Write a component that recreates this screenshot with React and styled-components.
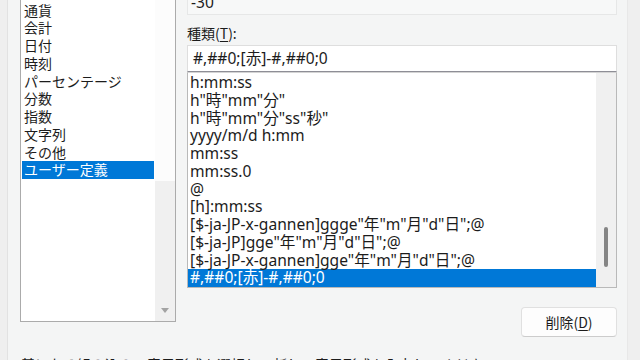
import React from 'react';
import styled, { createGlobalStyle } from 'styled-components';

const GlobalStyle = createGlobalStyle`
    html, body {
        margin: 0;
        padding: 0;
        background: #f4f5f5;
    }
    body {
        font-family: "Noto Sans", "Noto Sans CJK JP", sans-serif;
        color: #1c1c1c;
    }
`;

const Window = styled.div`
    display: flex;
    width: 640px;
    height: 360px;
    overflow: hidden;
    background: #f4f5f5;
`;

const LeftEdge = styled.div`
    width: 7px;
    flex: none;
    background: #efefef;
    border-right: 1px solid #e2e2e2;
`;

const RightEdge = styled.div`
    width: 12px;
    flex: none;
    background: #efefef;
    border-left: 1px solid #e8e8e8;
`;

// ダイアログ本体は上が少し切れている
const Dialog = styled.div`
    flex: 1;
    display: flex;
    flex-direction: column;
    margin-top: -38px;
    padding: 0 10px 0 12px;
    min-width: 0;
`;

const Main = styled.div`
    display: flex;
    gap: 11px;
    align-items: flex-start;
`;

const CategoryList = styled.div`
    width: 156px;
    height: 360px;
    box-sizing: border-box;
    flex: none;
    display: flex;
    background: #ffffff;
    border: 1px solid #ababab;
`;

const Items = styled.div`
    flex: 1;
    padding: 3px 1px 1px 1px;
    overflow: hidden;
`;

const CategoryItem = styled.div`
    height: 17.75px;
    line-height: 17.75px;
    padding-left: 2px;
    font-family: "Noto Sans CJK JP", sans-serif;
    font-size: 14px;
    white-space: nowrap;
    background: ${props => props.selected ? '#0078d7' : 'transparent'};
    color: ${props => props.selected ? '#ffffff' : '#1c1c1c'};
`;

const Track = styled.div`
    width: 20px;
    flex: none;
    display: flex;
    flex-direction: column;
    align-items: center;
    background: #f0f0f0;
    padding-bottom: ${props => props.arrow ? '8px' : '0'};
    box-sizing: border-box;
`;

const LightThumb = styled.div`
    align-self: stretch;
    height: 218px;
    background: #fcfcfc;
`;

const DownArrow = styled.div`
    margin-top: auto;
    width: 0;
    height: 0;
    border-left: 4px solid transparent;
    border-right: 4px solid transparent;
    border-top: 5px solid #a3a3a3;
`;

const Thumb = styled.div`
    width: 4px;
    height: 40px;
    margin-top: 154px;
    border-radius: 2px;
    background: #858585;
`;

const RightColumn = styled.div`
    flex: 1;
    display: flex;
    flex-direction: column;
    min-width: 0;
`;

const Sample = styled.div`
    margin-top: 28px;
    height: 25px;
    box-sizing: border-box;
    border: 1px solid #e6e7e7;
    background: #f7f8f8;
    padding-left: 3px;
    font-size: 15.6px;
    line-height: 23px;
`;

const Label = styled.div`
    margin-top: 9px;
    height: 18px;
    line-height: 18px;
    font-size: 14px;
    font-family: "Noto Sans CJK JP", sans-serif;
`;

const Key = styled.span`
    text-decoration: underline;
    text-underline-offset: 2px;
`;

const FormatInput = styled.div`
    margin-top: 3px;
    height: 27px;
    box-sizing: border-box;
    background: #ffffff;
    border: 1px solid #dedede;
    border-bottom: 1px solid #8e8e96;
    padding-left: 5px;
    font-size: 15.6px;
    line-height: 25px;
    white-space: nowrap;
`;

const FormatList = styled.div`
    height: 216px;
    box-sizing: border-box;
    display: flex;
    background: #ffffff;
    border: 1px solid #b9b9b9;
    border-top-color: #d4d4d4;
`;

const FormatRows = styled.div`
    flex: 1;
    padding-top: 1px;
    overflow: hidden;
    min-width: 0;
`;

const FormatRow = styled.div`
    height: 17.75px;
    line-height: 17.75px;
    padding-left: 2px;
    font-size: 15.6px;
    white-space: nowrap;
    background: ${props => props.selected ? '#0078d7' : 'transparent'};
    color: ${props => props.selected ? '#ffffff' : '#1c1c1c'};
`;

const ButtonRow = styled.div`
    display: flex;
    justify-content: flex-end;
    margin-top: 19px;
`;

const Button = styled.button`
    width: 96px;
    height: 30px;
    border: 1px solid #e0e0e0;
    border-bottom-color: #cccccc;
    border-radius: 4px;
    background: #fdfdfd;
    font-family: "Noto Sans CJK JP", sans-serif;
    font-size: 14px;
    color: #1c1c1c;
    padding: 0;
`;

const Description = styled.div`
    margin-top: 17px;
    padding-left: 1px;
    font-family: "Noto Sans CJK JP", sans-serif;
    font-size: 14px;
    line-height: 20px;
    white-space: nowrap;
`;

const categories = [
    '標準', '数値', '通貨', '会計', '日付', '時刻', 'パーセンテージ',
    '分数', '指数', '文字列', 'その他', 'ユーザー定義',
];

const formats = [
    'h:mm:ss',
    'h"時"mm"分"',
    'h"時"mm"分"ss"秒"',
    'yyyy/m/d h:mm',
    'mm:ss',
    'mm:ss.0',
    '@',
    '[h]:mm:ss',
    '[$-ja-JP-x-gannen]ggge"年"m"月"d"日";@',
    '[$-ja-JP]gge"年"m"月"d"日";@',
    '[$-ja-JP-x-gannen]gge"年"m"月"d"日";@',
    '#,##0;[赤]-#,##0;0',
];

const App = () => {
    const selectedCategory = 'ユーザー定義';
    const selectedFormat = formats.length - 1;

    return <>
        <GlobalStyle />
        <Window>
            <LeftEdge />
            <Dialog>
                <Main>
                    <CategoryList>
                        <Items>
                            {categories.map(c =>
                                <CategoryItem key={c} selected={c === selectedCategory}>{c}</CategoryItem>
                            )}
                        </Items>
                        <Track arrow>
                            <LightThumb />
                            <DownArrow />
                        </Track>
                    </CategoryList>
                    <RightColumn>
                        <Sample>-30</Sample>
                        <Label>種類(<Key>T</Key>):</Label>
                        <FormatInput>{formats[selectedFormat]}</FormatInput>
                        <FormatList>
                            <FormatRows>
                                {formats.map((f, i) =>
                                    <FormatRow key={f} selected={i === selectedFormat}>{f}</FormatRow>
                                )}
                            </FormatRows>
                            <Track>
                                <Thumb />
                            </Track>
                        </FormatList>
                        <ButtonRow>
                            <Button>削除(<Key>D</Key>)</Button>
                        </ButtonRow>
                    </RightColumn>
                </Main>
                <Description>基になる組み込みの表示形式を選択し、新しい表示形式を入力してください。</Description>
            </Dialog>
            <RightEdge />
        </Window>
    </>
}

export default App;
